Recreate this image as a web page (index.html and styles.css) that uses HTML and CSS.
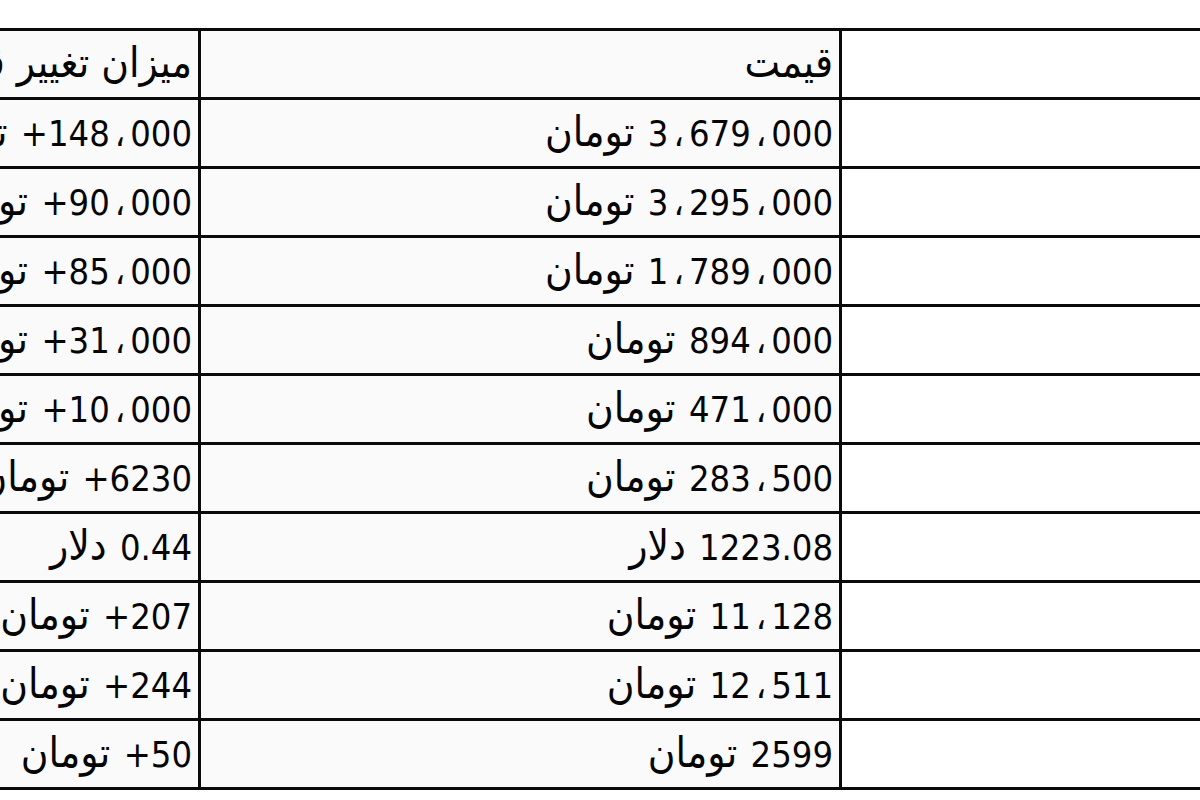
FILE: index.html
```html
<!DOCTYPE html>
<html lang="fa">
<head>
<meta charset="utf-8">
<title>قیمت</title>
<link rel="stylesheet" href="styles.css">
</head>
<body>
<div class="page">
  <table class="prices" dir="rtl">
    <tr>
      <td class="name"></td>
      <td class="cell head">قیمت</td>
      <td class="cell head">میزان تغییر قیمت</td>
    </tr>
    <tr>
      <td class="name"></td>
      <td class="cell"><span class="n">3<span class="s">،</span>679<span class="s">،</span>000</span> <span class="u">تومان</span></td>
      <td class="cell"><span class="n">+148<span class="s">،</span>000</span> <span class="u">تومان</span></td>
    </tr>
    <tr>
      <td class="name"></td>
      <td class="cell"><span class="n">3<span class="s">،</span>295<span class="s">،</span>000</span> <span class="u">تومان</span></td>
      <td class="cell"><span class="n">+90<span class="s">،</span>000</span> <span class="u">تومان</span></td>
    </tr>
    <tr>
      <td class="name"></td>
      <td class="cell"><span class="n">1<span class="s">،</span>789<span class="s">،</span>000</span> <span class="u">تومان</span></td>
      <td class="cell"><span class="n">+85<span class="s">،</span>000</span> <span class="u">تومان</span></td>
    </tr>
    <tr>
      <td class="name"></td>
      <td class="cell"><span class="n">894<span class="s">،</span>000</span> <span class="u">تومان</span></td>
      <td class="cell"><span class="n">+31<span class="s">،</span>000</span> <span class="u">تومان</span></td>
    </tr>
    <tr>
      <td class="name"></td>
      <td class="cell"><span class="n">471<span class="s">،</span>000</span> <span class="u">تومان</span></td>
      <td class="cell"><span class="n">+10<span class="s">،</span>000</span> <span class="u">تومان</span></td>
    </tr>
    <tr>
      <td class="name"></td>
      <td class="cell"><span class="n">283<span class="s">،</span>500</span> <span class="u">تومان</span></td>
      <td class="cell"><span class="n">+6230</span> <span class="u">تومان</span></td>
    </tr>
    <tr>
      <td class="name"></td>
      <td class="cell"><span class="n">1223.08</span> <span class="u">دلار</span></td>
      <td class="cell"><span class="n">0.44</span> <span class="u">دلار</span></td>
    </tr>
    <tr>
      <td class="name"></td>
      <td class="cell"><span class="n">11<span class="s">،</span>128</span> <span class="u">تومان</span></td>
      <td class="cell"><span class="n">+207</span> <span class="u">تومان</span></td>
    </tr>
    <tr>
      <td class="name"></td>
      <td class="cell"><span class="n">12<span class="s">،</span>511</span> <span class="u">تومان</span></td>
      <td class="cell"><span class="n">+244</span> <span class="u">تومان</span></td>
    </tr>
    <tr>
      <td class="name"></td>
      <td class="cell"><span class="n">2599</span> <span class="u">تومان</span></td>
      <td class="cell"><span class="n">+50</span> <span class="u">تومان</span></td>
    </tr>
  </table>
</div>
</body>
</html>
```

FILE: styles.css
```css
html, body {
  margin: 0;
  padding: 0;
  background: #ffffff;
}

.page {
  width: 1200px;
  height: 800px;
  overflow: hidden;
  padding-top: 28px;
  box-sizing: border-box;
}

.prices {
  border-collapse: collapse;
  table-layout: fixed;
  width: 1344px;
  margin-left: -104px;
  font-family: "DejaVu Sans Condensed", "DejaVu Sans", sans-serif;
  font-size: 36px;
  color: #050505;
}

.prices td {
  border: 3px solid #0a0a0a;
  height: 69px;
  padding: 0 6px 2px 6px;
  box-sizing: border-box;
  white-space: nowrap;
  overflow: hidden;
  text-align: right;
  vertical-align: middle;
  line-height: 1;
}

.prices td.name {
  width: 401px;
  background: #ffffff;
}

.prices td.cell {
  background: #fafafa;
}

.prices td.cell:nth-child(2) {
  width: 641px;
}

.prices td.cell:nth-child(3) {
  width: 302px;
}

.prices td.head {
  font-size: 42px;
}

.n {
  direction: ltr;
  unicode-bidi: isolate;
  margin-left: 3px;
}

.s {
  padding: 0 5px;
}

.u {
  font-size: 42px;
}
```
